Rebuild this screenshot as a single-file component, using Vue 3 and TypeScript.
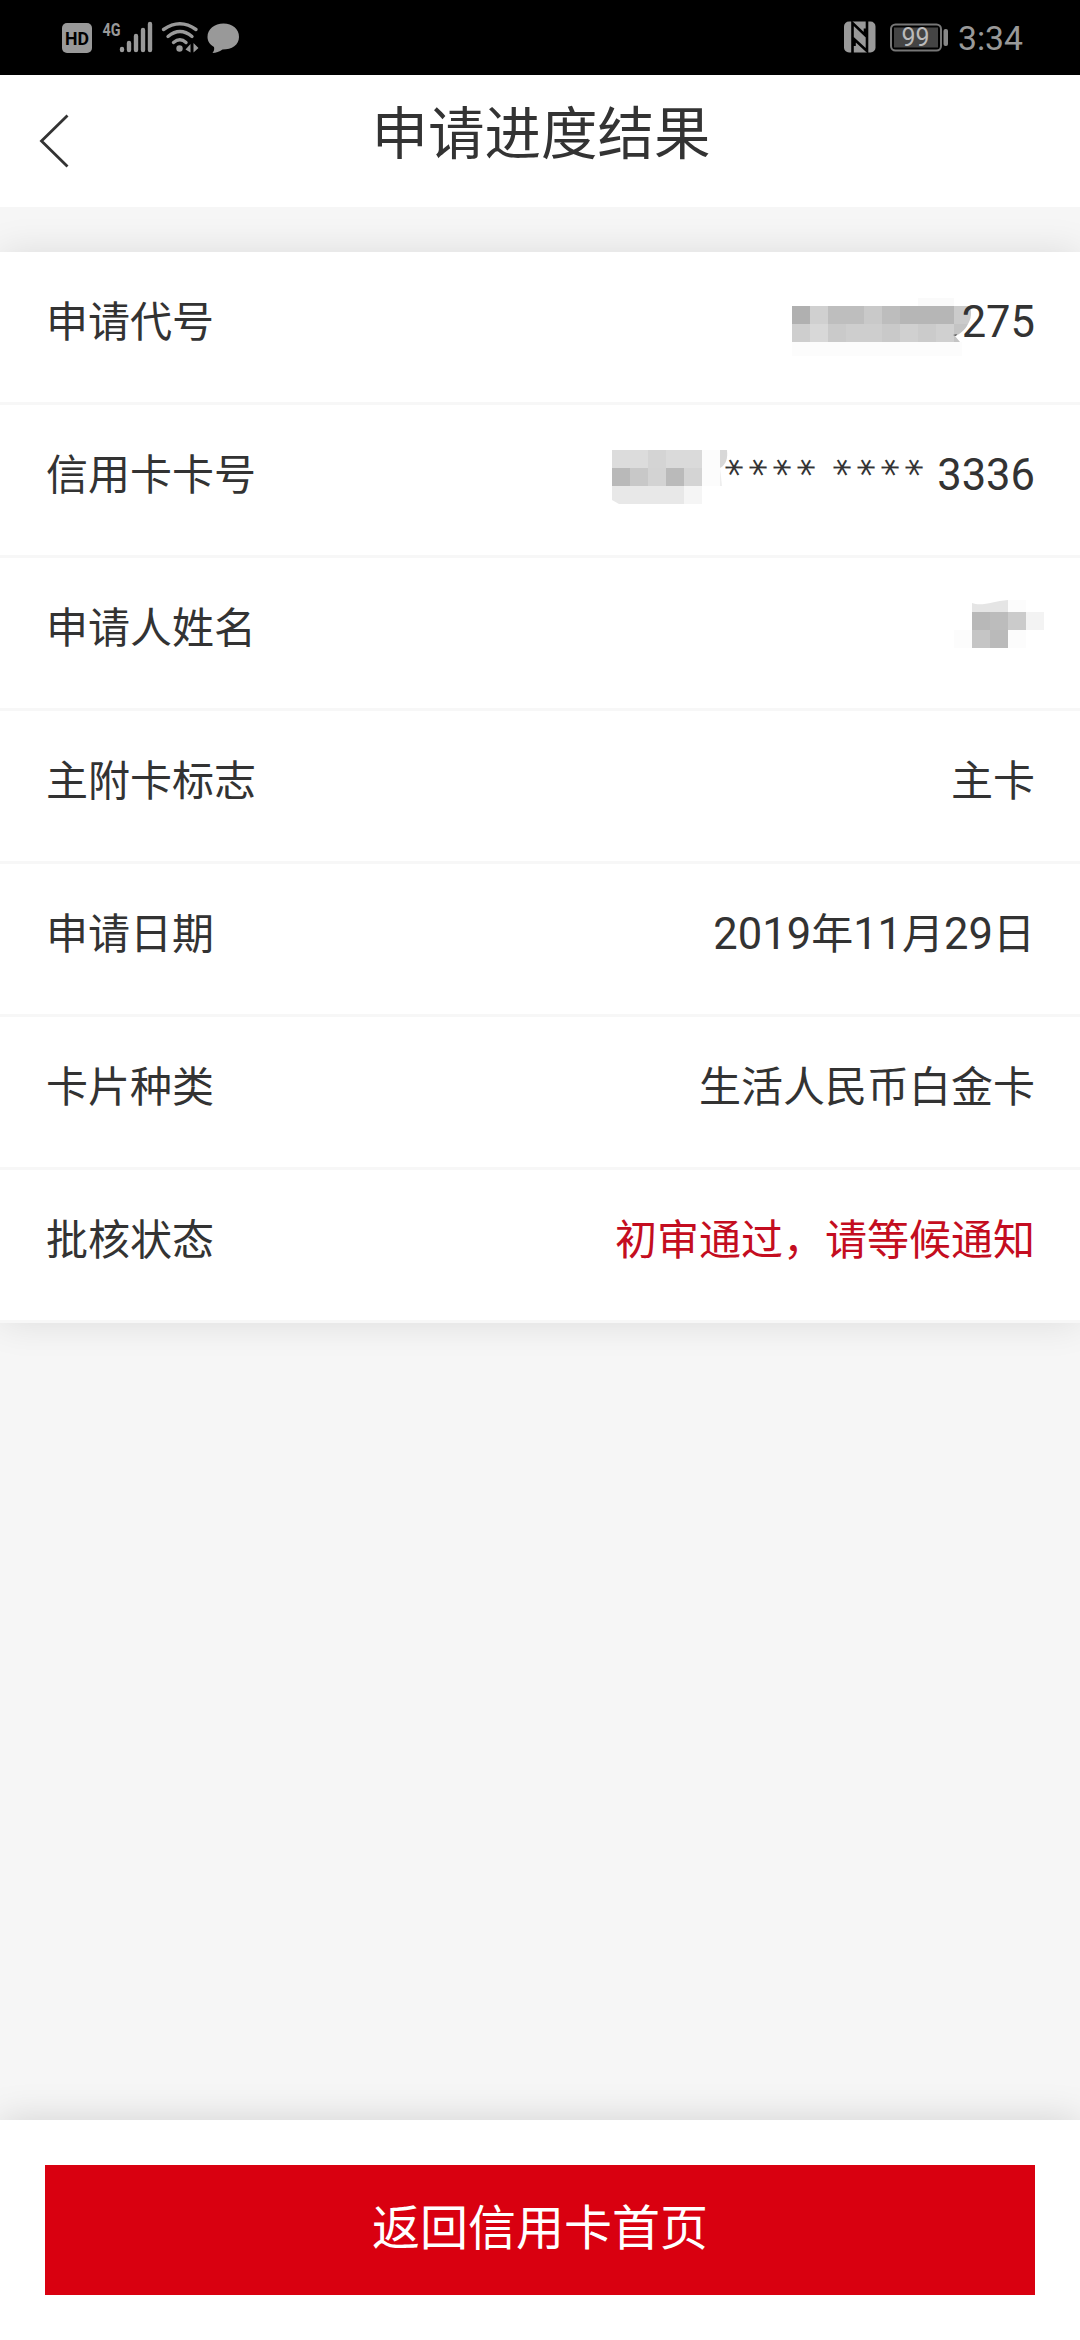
<script setup lang="ts">
interface Cell {
  x: number
  y: number
  w: number
  h: number
  fill: string
}

interface Row {
  label: string
  value: string
  stars?: boolean
  alert?: boolean
  cells?: Cell[]
  shapes?: { d: string; fill: string }[]
}

const cell = (x: number, y: number, w: number, h: number, fill: string): Cell => ({ x, y, w, h, fill })

// Digits are set in a slightly larger latin face than the surrounding characters.
const parts = (text: string): string[] => text.split(/(\d+)/).filter(Boolean)
const isDigits = (text: string): boolean => /^\d+$/.test(text)

// Mask cells use coordinates local to their row.
const rows: Row[] = [
  {
    label: '申请代号',
    value: '275',
    cells: [
      cell(792, 90, 170, 14, '#fcfcfc'),
      cell(918, 46, 36, 8, '#fafafa'),
      cell(792, 54, 18, 18, '#b0b0b0'),
      cell(810, 54, 18, 18, '#d0d0d0'),
      cell(828, 54, 36, 18, '#bebebe'),
      cell(864, 54, 18, 18, '#c9c9c9'),
      cell(882, 54, 18, 18, '#bdbdbd'),
      cell(900, 54, 54, 18, '#b6b6b6'),
      cell(792, 72, 18, 18, '#cecece'),
      cell(810, 72, 18, 18, '#d8d8d8'),
      cell(828, 72, 18, 18, '#cacaca'),
      cell(846, 72, 36, 18, '#cecece'),
      cell(882, 72, 18, 18, '#c9c9c9'),
      cell(900, 72, 18, 18, '#d0d0d0'),
      cell(918, 72, 18, 18, '#cbcbcb'),
      cell(936, 72, 18, 18, '#d0d0d0')
    ],
    shapes: [
      { d: 'M954 54H970C972 61 971 67 968 72H954Z', fill: '#cbcbcb' },
      { d: 'M954 72H968C965 78 960 82 955 84L960 90H954Z', fill: '#c4c4c4' },
      { d: 'M953 83L957 82L956 84Z', fill: '#555' }
    ]
  },
  {
    label: '信用卡卡号',
    value: '3336',
    stars: true,
    cells: [
      cell(612, 45, 36, 18, '#dcdcdc'),
      cell(648, 45, 18, 18, '#d4d4d4'),
      cell(666, 45, 36, 18, '#dadada'),
      cell(612, 63, 18, 18, '#b9b9b9'),
      cell(630, 63, 18, 18, '#c8c8c8'),
      cell(648, 63, 18, 18, '#d3d3d3'),
      cell(666, 63, 18, 18, '#bababa'),
      cell(684, 63, 18, 18, '#d4d4d4'),
      cell(684, 81, 18, 18, '#f5f5f5'),
      cell(702, 45, 18, 36, '#fcfcfc')
    ],
    shapes: [
      { d: 'M612 81H684V99H619L612 95Z', fill: '#e8e8e8' },
      { d: 'M720 45H727C728 53 726 60 720 63Z', fill: '#d8d8d8' },
      { d: 'M720 63L722 81H720Z', fill: '#eeeeee' }
    ]
  },
  {
    label: '申请人姓名',
    value: '',
    cells: [
      cell(954, 72, 18, 18, '#fcfcfc'),
      cell(1008, 42, 18, 12, '#fcfcfc'),
      cell(972, 54, 18, 18, '#b8b8b8'),
      cell(990, 54, 18, 18, '#bcbcbc'),
      cell(1008, 54, 18, 18, '#cbcbcb'),
      cell(1026, 54, 18, 18, '#f3f3f3'),
      cell(972, 72, 18, 18, '#c5c5c5'),
      cell(990, 72, 18, 18, '#bababa'),
      cell(1008, 72, 18, 18, '#fcfcfc')
    ],
    shapes: [{ d: 'M972 45C982 49 993 43 1008 42V54H972Z', fill: '#e5e5e5' }]
  },
  { label: '主附卡标志', value: '主卡' },
  { label: '申请日期', value: '2019年11月29日' },
  { label: '卡片种类', value: '生活人民币白金卡' },
  { label: '批核状态', value: '初审通过，请等候通知', alert: true }
]
</script>

<template>
  <div class="screen">
    <div class="status">
      <svg class="status-left" width="220" height="75" viewBox="40 0 220 75">
        <rect x="62" y="23" width="30" height="30" rx="5" fill="#999" />
        <text x="77" y="45" class="hd" text-anchor="middle" textLength="24" lengthAdjust="spacingAndGlyphs">HD</text>
        <text x="102.500" y="36" class="net" textLength="18" lengthAdjust="spacingAndGlyphs">4G</text>
        <g stroke="#999" stroke-width="4.400" stroke-linecap="round">
          <path d="M122 49V50M129 43V50M136 36V50M143 30V50M150 24V50" />
        </g>
        <g fill="none" stroke="#999" stroke-width="3.400" stroke-linecap="round">
          <path d="M163.500 29.500Q180 18 196 29.500M168 36.500Q180 26.500 192 36.500M173.500 42.500Q180 37 186 42.500" />
        </g>
        <circle cx="179.500" cy="48.500" r="3.200" fill="#999" />
        <path d="M190.500 44V52.500L185.500 49.500ZM193.500 43L198.500 48L193.500 52.500Z" fill="#999" />
        <path d="M223.500 23.500C232.500 23.500 239 29 239 37C239 45 232 49.500 222.500 49.500C219.500 51.500 216 53 212.500 53C214 51 214.500 49.500 214 47C210 44.500 207.500 41.500 207.500 37C207.500 29 214.500 23.500 223.500 23.500Z" fill="#999" />
      </svg>
      <svg width="260" height="75" viewBox="820 0 260 75">
        <rect x="844" y="21.500" width="31.500" height="31" rx="5" fill="#999" />
        <path d="M852.500 53V23L865 35V28.500M867 21V51L854.500 39.500V46" fill="none" stroke="#000" stroke-width="2.600" />
        <rect x="891" y="24.500" width="50" height="26" rx="4.500" fill="none" stroke="#777" stroke-width="2" />
        <rect x="894" y="27.500" width="44" height="20" fill="#444" />
        <rect x="943.500" y="29" width="4.500" height="17" rx="2" fill="#888" />
        <text x="915.500" y="46" class="battery" text-anchor="middle" textLength="28" lengthAdjust="spacingAndGlyphs">99</text>
        <text x="958" y="50" class="clock" textLength="65" lengthAdjust="spacingAndGlyphs">3:34</text>
      </svg>
    </div>

    <header class="header">
      <svg class="back" width="44" height="64" viewBox="30 108 44 64">
        <path d="M67.500 115.500L41.500 141L67.500 166.500" fill="none" stroke="#333" stroke-width="2.800" />
      </svg>
      <h1>申请进度结果</h1>
    </header>

    <main class="list">
      <div v-for="row in rows" :key="row.label" class="row">
        <svg v-if="row.cells" class="mask" viewBox="0 0 1080 150" shape-rendering="crispEdges">
          <rect v-for="(c, i) in row.cells" :key="i" :x="c.x" :y="c.y" :width="c.w" :height="c.h" :fill="c.fill" />
          <path v-for="(s, i) in row.shapes" :key="'s' + i" :d="s.d" :fill="s.fill" shape-rendering="auto" />
        </svg>
        <span class="label">{{ row.label }}</span>
        <span class="value" :class="{ alert: row.alert }">
          <span v-if="row.stars" class="stars">
            <span v-for="g in 2" :key="g" class="group"><i v-for="n in 4" :key="n">*</i></span>
          </span>
          <span class="text"><span v-for="(p, i) in parts(row.value)" :key="i" :class="{ digits: isDigits(p) }">{{ p }}</span></span>
        </span>
      </div>
    </main>

    <footer class="footer">
      <button type="button">返回信用卡首页</button>
    </footer>
  </div>
</template>

<style>
body {
  margin: 0;
  background: #f6f6f6;
}
</style>

<style scoped>
.screen {
  display: flex;
  flex-direction: column;
  width: 1080px;
  height: 2340px;
  overflow: hidden;
  background: #f6f6f6;
  color: #333;
  font-family: "Noto Sans CJK SC", sans-serif;
}
.status {
  display: flex;
  justify-content: space-between;
  height: 75px;
  flex: none;
  background: #000;
}
.status-left {
  margin-left: 40px;
}
.hd {
  font: 700 19px Roboto, sans-serif;
  fill: #000;
}
.net {
  font: 700 19px Roboto, sans-serif;
  fill: #999;
}
.battery {
  font: 400 25px Roboto, sans-serif;
  fill: #bbb;
}
.clock {
  font: 400 34px Roboto, sans-serif;
  fill: #999;
}
.header {
  display: flex;
  flex: none;
  height: 132px;
  background: #fff;
}
.back {
  margin: 33px 0 0 30px;
}
h1 {
  flex: 1;
  margin: 14px 72px 0 0;
  font-size: 56.5px;
  line-height: 80px;
  font-weight: 400;
  text-align: center;
}
.list {
  flex: none;
  margin-top: 45px;
  background: #fff;
  box-shadow: 0 0 36px rgba(0, 0, 0, 0.11);
}
.row {
  position: relative;
  display: flex;
  justify-content: space-between;
  height: 150px;
  padding: 0 45px 0 46px;
  border-bottom: 3px solid #f7f7f7;
  font-size: 42px;
  line-height: 133px;
}
.mask {
  position: absolute;
  left: 0;
  top: 0;
  width: 1080px;
  height: 150px;
}
.value {
  position: relative;
  display: flex;
}
.digits {
  font-family: Roboto, sans-serif;
  font-size: 43.5px;
  line-height: 1;
}
.alert {
  color: #c40d20;
}
.stars,
.group {
  display: flex;
}
.group {
  margin-right: 11.5px;
}
.group i {
  width: 24px;
  height: 133px;
  font-family: "DejaVu Sans", sans-serif;
  font-size: 36px;
  font-style: normal;
  text-align: center;
  transform: translateY(2px) rotate(30deg);
  transform-origin: 50% 60.5px;
}
.footer {
  box-sizing: border-box;
  height: 220px;
  margin-top: auto;
  padding: 45px;
  background: #fff;
  box-shadow: 0 0 36px rgba(0, 0, 0, 0.15);
}
button {
  display: block;
  width: 100%;
  height: 130px;
  padding: 0 0 12px;
  border: 0;
  background: #d90010;
  color: #fff;
  font: 400 48px "Noto Sans CJK SC", sans-serif;
}
</style>
